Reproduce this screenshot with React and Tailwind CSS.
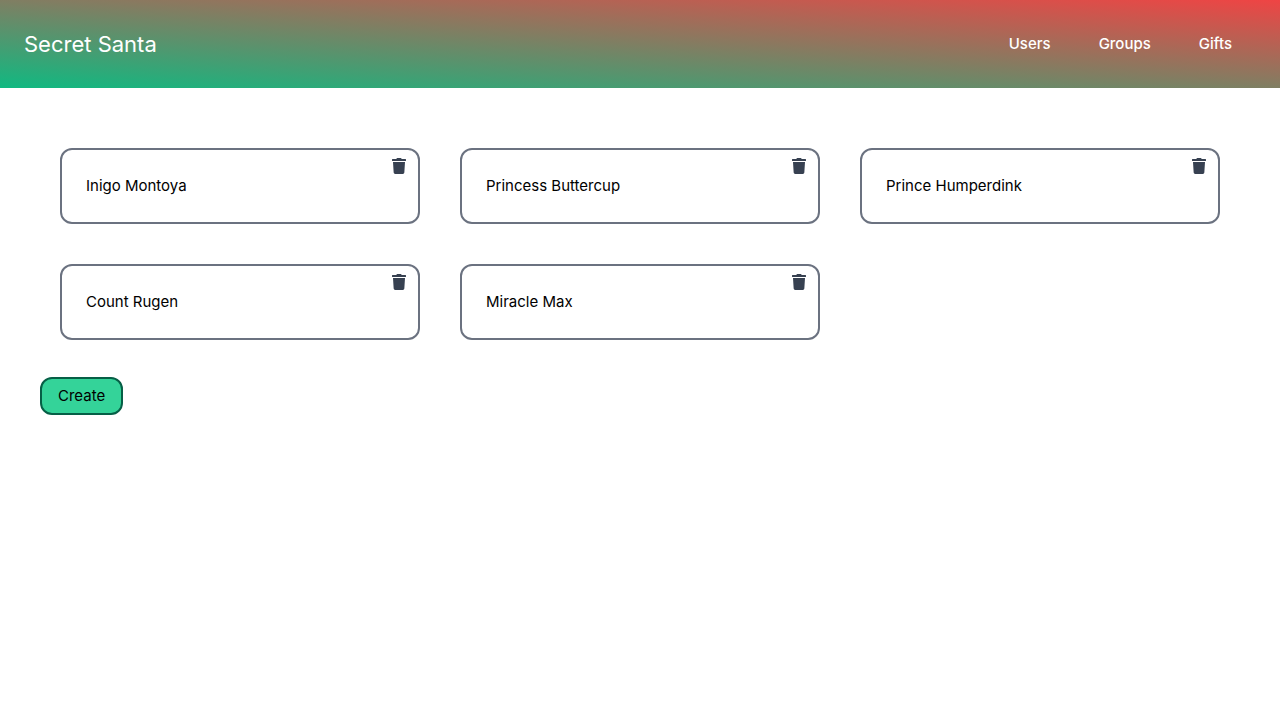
import { FaTrash } from "react-icons/fa";

const users = ["Inigo Montoya", "Princess Buttercup", "Prince Humperdink", "Count Rugen", "Miracle Max"];
const links = ["Users", "Groups", "Gifts"];

export default function App() {
  return (
    <div className="font-['Inter',sans-serif] text-[15px] leading-6 text-black">
      <header className="flex items-center justify-between bg-linear-to-tr/srgb from-[#10b981] to-[#ef4444] p-6 text-white">
        <a href="#home" className="text-[22px] leading-10">Secret Santa</a>
        <nav className="flex gap-12 px-6 font-medium">
          {links.map((l) => (
            <a key={l} href={"#" + l.toLowerCase()}>{l}</a>
          ))}
        </nav>
      </header>
      <main className="p-10">
        <ul className="grid grid-cols-3 gap-10 p-5">
          {users.map((u) => (
            <li key={u} className="relative rounded-xl border-2 border-[#6b7280] p-6">
              {u}
              <button type="button" aria-label={"Delete " + u} className="absolute top-2 right-3 text-[#374151]">
                <FaTrash className="block h-4 w-[14px]" />
              </button>
            </li>
          ))}
        </ul>
        <button type="button" className="mt-[17px] rounded-xl border-2 border-[#065f46] bg-[#34d399] px-4 py-[5px]">
          Create
        </button>
      </main>
    </div>
  );
}
